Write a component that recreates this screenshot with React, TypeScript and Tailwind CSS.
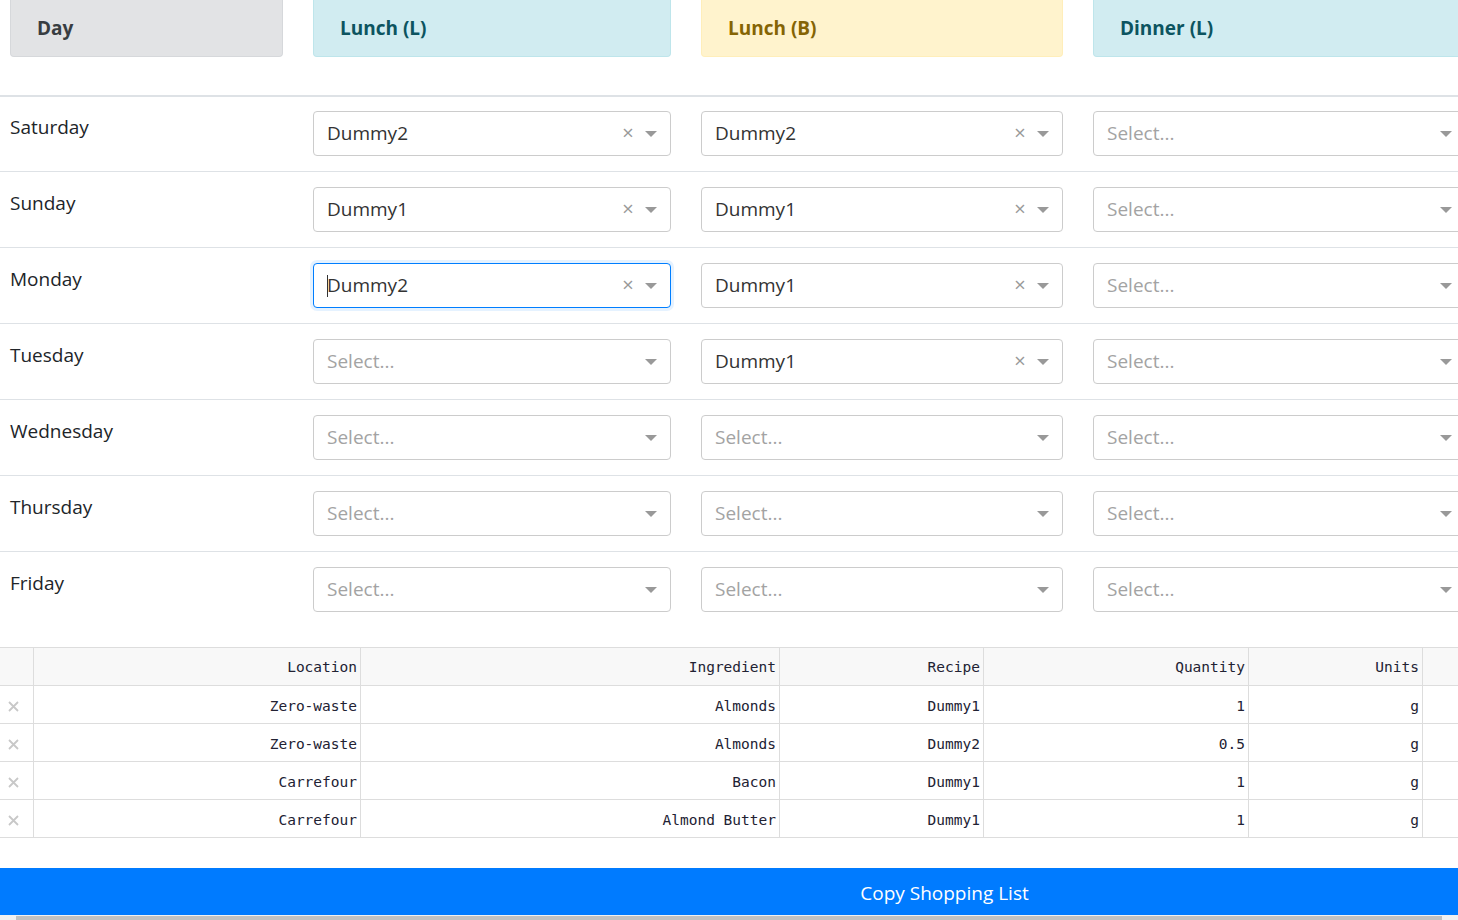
import React from "react";

type Meal = { value?: string; focused?: boolean };

const days: { day: string; meals: Meal[] }[] = [
  { day: "Saturday", meals: [{ value: "Dummy2" }, { value: "Dummy2" }, {}] },
  { day: "Sunday", meals: [{ value: "Dummy1" }, { value: "Dummy1" }, {}] },
  { day: "Monday", meals: [{ value: "Dummy2", focused: true }, { value: "Dummy1" }, {}] },
  { day: "Tuesday", meals: [{}, { value: "Dummy1" }, {}] },
  { day: "Wednesday", meals: [{}, {}, {}] },
  { day: "Thursday", meals: [{}, {}, {}] },
  { day: "Friday", meals: [{}, {}, {}] },
];

const shopping = [
  { location: "Zero-waste", ingredient: "Almonds", recipe: "Dummy1", qty: "1", units: "g" },
  { location: "Zero-waste", ingredient: "Almonds", recipe: "Dummy2", qty: "0.5", units: "g" },
  { location: "Carrefour", ingredient: "Bacon", recipe: "Dummy1", qty: "1", units: "g" },
  { location: "Carrefour", ingredient: "Almond Butter", recipe: "Dummy1", qty: "1", units: "g" },
];

const colWidths = ["w-[358px]", "w-[362px]", "w-[373px]"];

function Select({ meal, width }: { meal: Meal; width: string }) {
  return (
    <div
      className={`${width} h-[45px] flex items-center rounded-[4px] border bg-white ${
        meal.focused
          ? "border-[#007eff] shadow-[0_0_0_3px_rgba(0,126,255,0.1)]"
          : "border-[#cccccc]"
      }`}
    >
      <div className="flex-1 flex items-center pl-[13px] text-[19px] leading-none">
        {meal.focused && <span className="w-px h-[22px] bg-[#333] -mr-px" />}
        {meal.value ? (
          <span className="text-[#333]">{meal.value}</span>
        ) : (
          <span className="text-[#a3a3a3]">Select...</span>
        )}
      </div>
      {meal.value && (
        <span className="w-[20px] text-center text-[20px] leading-none text-[#999] pb-[1px]">
          ×
        </span>
      )}
      <span className="w-[26px] mr-[6px] flex justify-center">
        <span className="w-0 h-0 border-x-[6px] border-t-[6px] border-x-transparent border-t-[#999]" />
      </span>
    </div>
  );
}

function HeaderBox({ label, width, tone }: { label: string; width: string; tone: string }) {
  return (
    <div
      className={`${width} h-[57px] flex items-center pl-[26px] rounded-b-[4px] border border-t-0 text-[19px] font-bold ${tone}`}
    >
      {label}
    </div>
  );
}

export default function App() {
  return (
    <div
      className="w-[1458px] h-[920px] overflow-hidden bg-white flex flex-col"
      style={{ fontFamily: "'Open Sans', 'Noto Sans', sans-serif" }}
    >
      <div className="w-[1889px] flex-1">
        {/* meal plan */}
        <div className="h-[97px] border-b-2 border-[#dee2e6] flex gap-[30px] pl-[10px]">
          <HeaderBox label="Day" width="w-[273px]" tone="bg-[#e2e3e5] border-[#d6d8db] text-[#383d41]" />
          <HeaderBox label="Lunch (L)" width="w-[358px]" tone="bg-[#d1ecf1] border-[#bee5eb] text-[#0c5460]" />
          <HeaderBox label="Lunch (B)" width="w-[362px]" tone="bg-[#fff3cd] border-[#ffeeba] text-[#856404]" />
          <HeaderBox label="Dinner (L)" width="w-[373px]" tone="bg-[#d1ecf1] border-[#bee5eb] text-[#0c5460]" />
        </div>
        {days.map((d, i) => (
          <div
            key={d.day}
            className={`flex gap-[30px] pl-[10px] ${
              i === 0 ? "h-[74px] pt-[14px]" : "h-[76px] pt-[15px] border-t border-[#dee2e6]"
            }`}
          >
            <div className="w-[273px] pt-[1px] text-[19px] leading-[30px] text-[#212529]">{d.day}</div>
            {d.meals.map((m, j) => (
              <Select key={j} meal={m} width={colWidths[j]} />
            ))}
          </div>
        ))}

        {/* shopping list */}
        <div
          className="mt-[20px] border-t border-[#dddddd] text-[14.5px] text-[#222233]"
          style={{ fontFamily: "'DejaVu Sans Mono', 'Liberation Mono', monospace" }}
        >
          <div className="grid grid-cols-[34px_327px_419px_204px_265px_174px_1fr] h-[38px] bg-[#f8f8f8] border-b border-[#dddddd]">
            <div className="border-r border-[#dddddd]" />
            {["Location", "Ingredient", "Recipe", "Quantity", "Units"].map((h) => (
              <div key={h} className="border-r border-[#dddddd] flex items-center justify-end pr-[3px] pt-[2px]">
                {h}
              </div>
            ))}
            <div />
          </div>
          {shopping.map((r, i) => (
            <div
              key={i}
              className="grid grid-cols-[34px_327px_419px_204px_265px_174px_1fr] h-[38px] border-b border-[#dddddd]"
            >
              <div className="border-r border-[#dddddd] flex items-center justify-center pr-[6px] pt-[3px]">
                <svg width="11" height="11" viewBox="0 0 11 11">
                  <path d="M1 1L10 10M10 1L1 10" stroke="#c8c8c8" strokeWidth="1.8" />
                </svg>
              </div>
              {[r.location, r.ingredient, r.recipe, r.qty, r.units].map((c, k) => (
                <div
                  key={k}
                  className="border-r border-[#dddddd] flex items-center justify-end pr-[3px] pt-[5px]"
                >
                  {c}
                </div>
              ))}
              <div />
            </div>
          ))}
        </div>

        <button
          type="button"
          className="mt-[30px] w-full h-[47px] pt-[3px] bg-[#007bff] text-white text-[19px]"
        >
          Copy Shopping List
        </button>
      </div>

      {/* horizontal scrollbar */}
      <div className="h-[5px] bg-[#f1f1f1] pt-px pl-[16px]">
        <div className="h-[4px] w-[1426px] bg-[#c1c1c1]" />
      </div>
    </div>
  );
}
